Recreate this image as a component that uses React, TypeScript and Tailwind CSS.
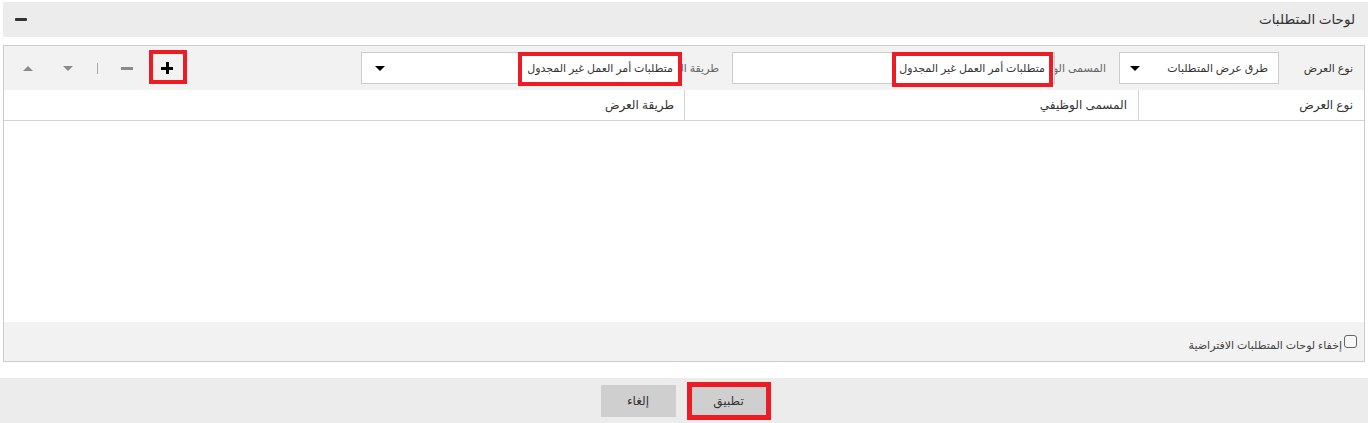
import React from 'react'

// small drawings used in the toolbar and selects
function Caret({ up = false, className = '' }: { up?: boolean; className?: string }) {
  return (
    <svg width="10" height="5" viewBox="0 0 10 5" className={className}>
      {up ? <path d="M0 5 L5 0 L10 5 Z" fill="currentColor" /> : <path d="M0 0 L10 0 L5 5 Z" fill="currentColor" />}
    </svg>
  )
}

function RedBox({ className }: { className: string }) {
  return <span className={`pointer-events-none absolute border-[4px] border-[#ed1c24] ${className}`} />
}

export default function App() {
  return (
    <div
      dir="rtl"
      className="h-[423px] w-full overflow-hidden bg-white pt-[2px] text-[#333]"
      style={{ fontFamily: '"Noto Sans", "DejaVu Sans", sans-serif' }}
    >
      {/* Page header */}
      <div className="ml-[3px] flex h-[35px] items-center justify-between bg-[#ececec] pl-[12px] pr-[13px]">
        <span className="text-[13.5px]">لوحات المتطلبات</span>
        <span className="block h-[3px] w-[12px] rounded-[1px] bg-[#333]" />
      </div>

      {/* Main panel */}
      <div className="mx-[3px] mt-[8px] flex h-[317px] flex-col border border-[#cccccc]">
        {/* Toolbar */}
        <div className="flex h-[44px] items-center bg-[#f2f2f2] text-[11px]">
          <div className="w-[85px] shrink-0 overflow-hidden whitespace-nowrap pr-[11px]">نوع العرض</div>
          <div className="flex h-[32px] w-[160px] shrink-0 items-center justify-between border border-[#cccccc] bg-white pl-[10px] pr-[10px]">
            <span className="whitespace-nowrap">طرق عرض المتطلبات</span>
            <Caret className="text-black" />
          </div>

          <div className="w-[64px] shrink-0 overflow-hidden whitespace-nowrap pr-[13px] text-[#666]">المسمى الوظيفي</div>
          <div className="relative flex h-[32px] w-[323px] shrink-0 items-center border border-[#cccccc] bg-white pr-[9px]">
            <span className="whitespace-nowrap">متطلبات أمر العمل غير المجدول</span>
            <RedBox className="right-[1px] top-[-1px] h-[35px] w-[161px]" />
          </div>

          <div className="w-[50px] shrink-0 overflow-hidden whitespace-nowrap pr-[13px] text-[#666]">طريقة العرض</div>
          <div className="relative flex h-[32px] w-[321px] shrink-0 items-center justify-between border border-[#cccccc] bg-white pl-[13px] pr-[8px]">
            <span className="whitespace-nowrap">متطلبات أمر العمل غير المجدول</span>
            <Caret className="text-black" />
            <RedBox className="right-[-1px] top-[-1px] h-[34px] w-[164px]" />
          </div>

          <div className="flex-1" />

          {/* Row actions */}
          <div dir="ltr" className="flex shrink-0 items-center pl-[19px]">
            <Caret up className="text-[#8a8a8a]" />
            <Caret className="ml-[30px] text-[#8a8a8a]" />
            <span className="ml-[24px] block h-[11px] w-px bg-[#aaa]" />
            <span className="ml-[23px] block h-[3px] w-[12px] bg-[#8a8a8a]" />
            <span className="relative ml-[28px] block h-[12px] w-[12px]">
              <span className="absolute left-0 top-[4.5px] h-[3px] w-[12px] bg-black" />
              <span className="absolute left-[4.5px] top-0 h-[12px] w-[3px] bg-black" />
              <RedBox className="left-[-12px] top-[-12px] h-[34px] w-[38px]" />
            </span>
          </div>
        </div>

        {/* Table header */}
        <div className="flex h-[31px] shrink-0 border-b border-[#d4d4d4] bg-white text-[12px]">
          <div className="flex w-[226px] shrink-0 items-center border-l border-[#d4d4d4] pr-[11px]">نوع العرض</div>
          <div className="flex w-[454px] shrink-0 items-center border-l border-[#d4d4d4] pr-[11px]">المسمى الوظيفي</div>
          <div className="flex flex-1 items-center pr-[10px]">طريقة العرض</div>
        </div>

        {/* Table body */}
        <div className="flex-1 bg-white" />

        {/* Footer */}
        <div className="flex h-[39px] shrink-0 items-center bg-[#f2f2f2] pr-[7px]">
          <span className="block h-[13px] w-[13px] shrink-0 rounded-[3px] border border-[#666] bg-[#f8f8f8]" />
          <span className="mr-[2px] mt-[7px] text-[11px] text-[#444]">إخفاء لوحات المتطلبات الافتراضية</span>
        </div>
      </div>

      {/* Dialog actions */}
      <div className="mt-[16px] flex h-[45px] justify-center gap-[14px] bg-[#ececec] pt-[7px] text-[12px]">
        <button className="relative h-[32px] w-[78px] bg-[#d0cfcf] text-[#333]">
          تطبيق
          <RedBox className="left-[-3px] top-[-3px] h-[38px] w-[84px] border-[5px]" />
        </button>
        <button className="h-[32px] w-[75px] bg-[#d0cfcf] text-[#333]">إلغاء</button>
      </div>
    </div>
  )
}
